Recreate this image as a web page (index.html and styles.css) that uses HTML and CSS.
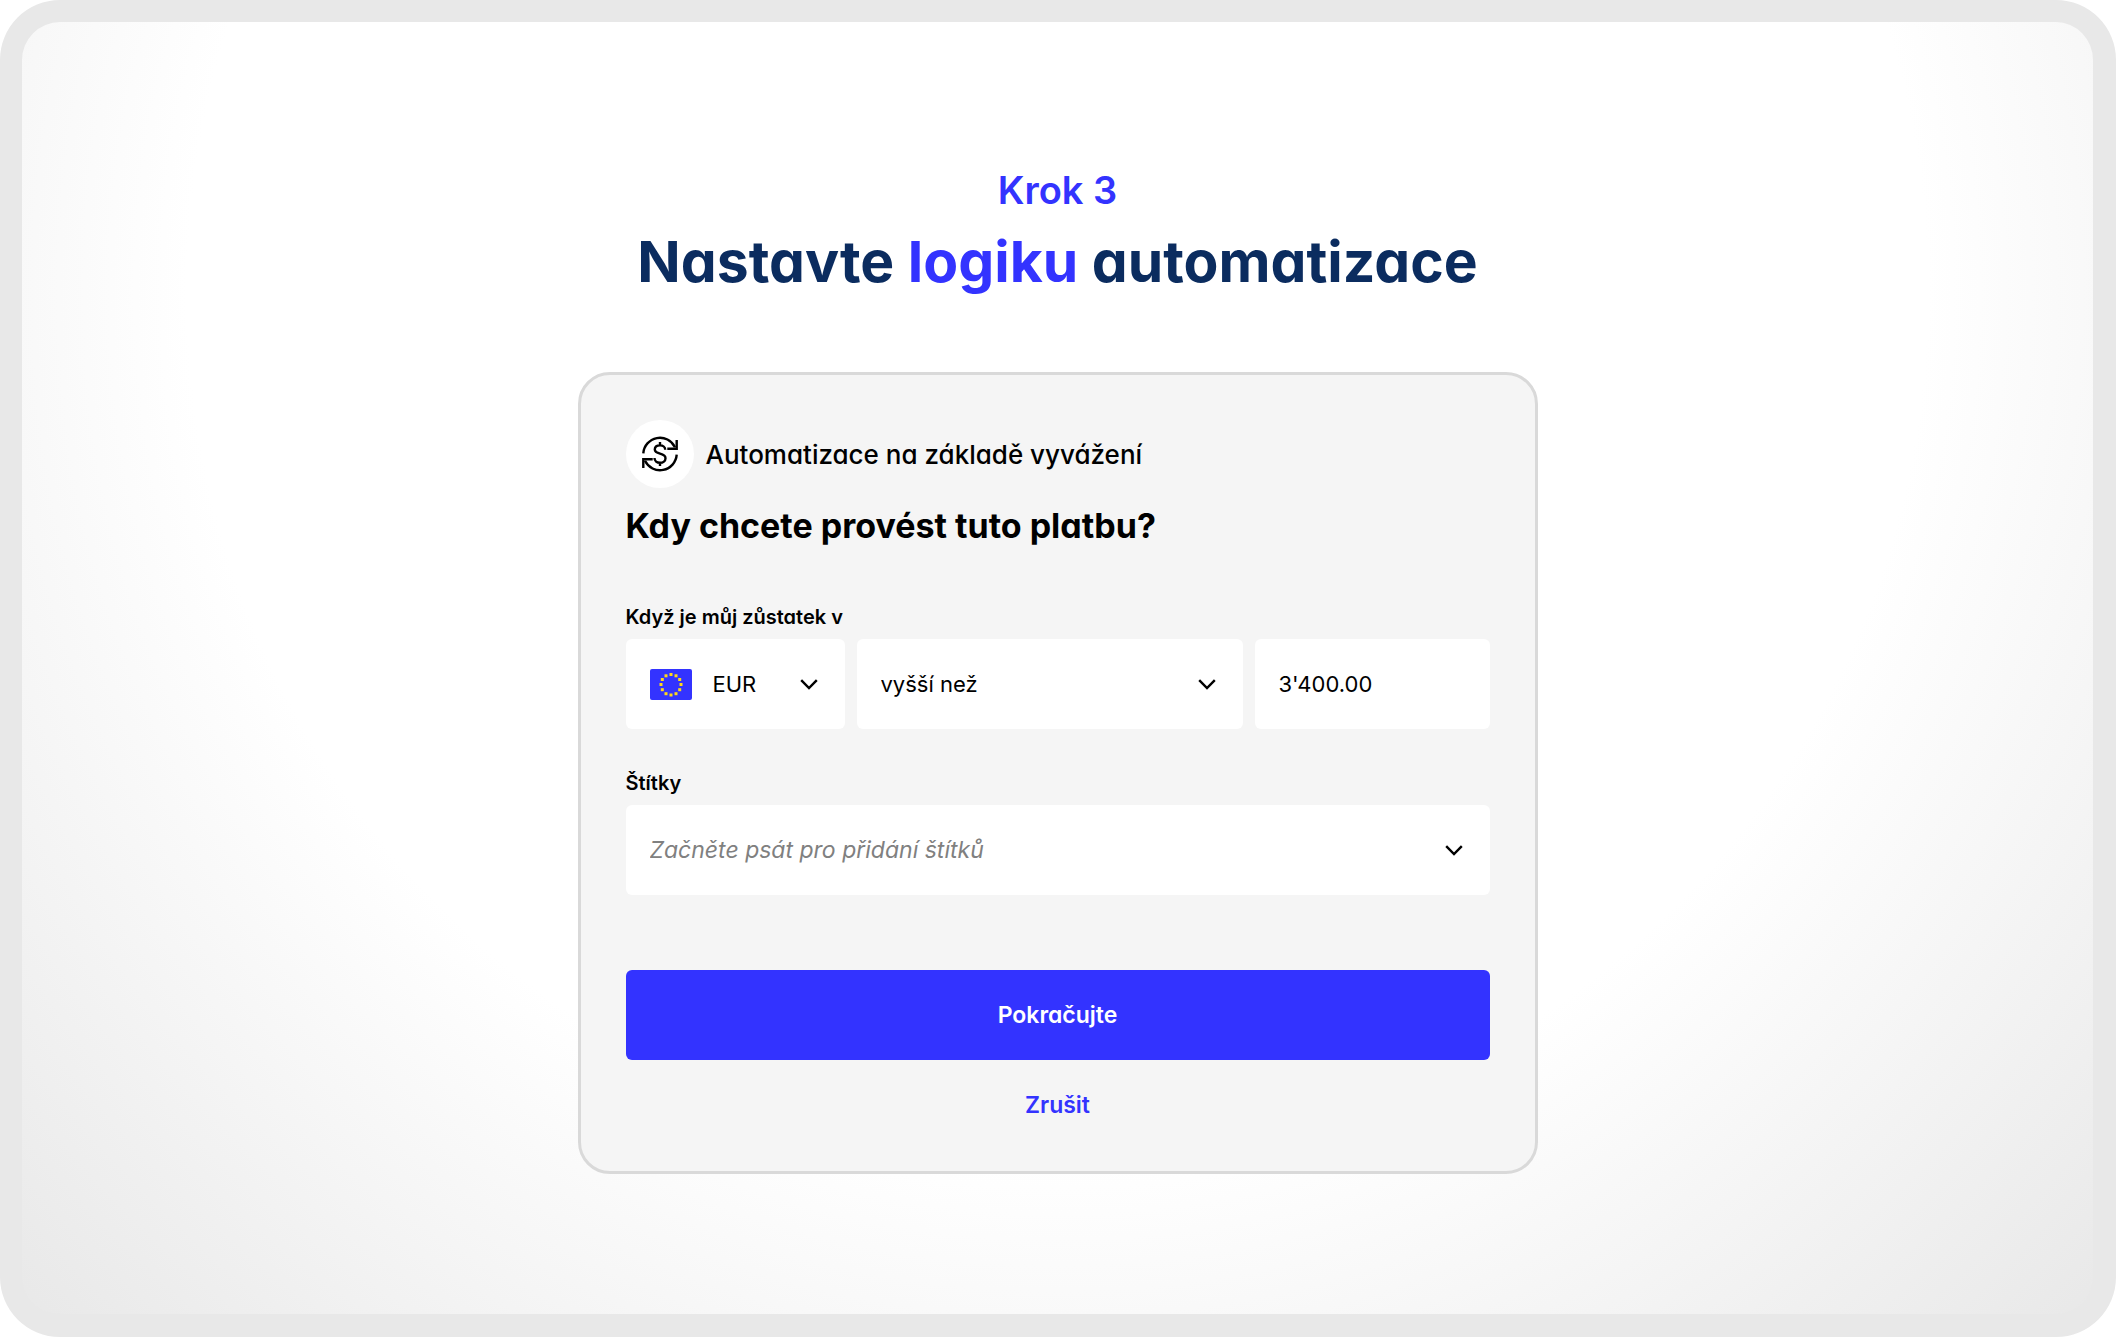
FILE: index.html
```
<!DOCTYPE html>
<html lang="cs">
<head>
  <meta charset="UTF-8">
  <meta name="viewport" content="width=device-width, initial-scale=1">
  <title>Nastavte logiku automatizace</title>
  <link rel="stylesheet" href="styles.css">
</head>
<body>

  <main class="frame">
    <header class="intro">
      <p class="step">Krok 3</p>
      <h1>Nastavte <span>logiku</span> automatizace</h1>
    </header>

    <form class="card">
      <div class="type">
        <div class="type-icon">
          <svg viewBox="0 0 36 36" width="36" height="36" fill="none" stroke="#000" stroke-width="2.4">
            <path d="M1.3 17.3A16.7 16.7 0 0 1 33 11.2"/>
            <path d="M34.7 4v8.8h-9.4"/>
            <path d="M34.7 18.7A16.7 16.7 0 0 1 3 24.8"/>
            <path d="M1.3 32v-8.8h9.4"/>
            <path d="M23.2 13.8c0-2.7-2.2-4.4-5.2-4.4s-5.2 1.6-5.2 4.2c0 5.6 10.7 2.6 10.7 8.6 0 2.8-2.4 4.6-5.5 4.6s-5.5-1.8-5.5-4.7M18 6v3.6M18 26.6V30"/>
          </svg>
        </div>
        <p>Automatizace na základě vyvážení</p>
      </div>

      <h2>Kdy chcete provést tuto platbu?</h2>

      <label class="field-label" for="currency">Když je můj zůstatek v</label>
      <div class="row">
        <div class="field currency">
          <svg class="flag" viewBox="0 0 42 31" width="42" height="31">
            <rect width="42" height="31" rx="2" fill="#3333ff"/>
            <g fill="#ffd91a">
              <rect x="19.5" y="4" width="3" height="3"/>
              <rect x="24.5" y="5.3" width="3" height="3"/>
              <rect x="28.2" y="9" width="3" height="3"/>
              <rect x="29.5" y="14" width="3" height="3"/>
              <rect x="28.2" y="19.2" width="3" height="3"/>
              <rect x="24.5" y="23.2" width="3" height="3"/>
              <rect x="19.5" y="24.5" width="3" height="3"/>
              <rect x="14.5" y="23.2" width="3" height="3"/>
              <rect x="10.8" y="19.2" width="3" height="3"/>
              <rect x="9.5" y="14" width="3" height="3"/>
              <rect x="10.8" y="9" width="3" height="3"/>
              <rect x="14.5" y="5.3" width="3" height="3"/>
            </g>
          </svg>
          <select id="currency">
            <option>EUR</option>
          </select>
          <svg class="chevron" viewBox="0 0 18 11" width="18" height="11"><path d="M1.2 1.2L9 9l7.8-7.8"/></svg>
        </div>
        <div class="field condition">
          <select aria-label="Podmínka">
            <option>vyšší než</option>
          </select>
          <svg class="chevron" viewBox="0 0 18 11" width="18" height="11"><path d="M1.2 1.2L9 9l7.8-7.8"/></svg>
        </div>
        <div class="field amount">
          <input type="text" value="3'400.00" aria-label="Částka">
        </div>
      </div>

      <label class="field-label" for="tags">Štítky</label>
      <div class="field">
        <input type="text" id="tags" placeholder="Začněte psát pro přidání štítků">
        <svg class="chevron" viewBox="0 0 18 11" width="18" height="11"><path d="M1.2 1.2L9 9l7.8-7.8"/></svg>
      </div>

      <button type="submit" class="submit">Pokračujte</button>
      <button type="button" class="cancel">Zrušit</button>
    </form>
  </main>

</body>
</html>
```
FILE: styles.css
```
* {
  box-sizing: border-box;
}

body {
  margin: 0;
  background: #fff;
  color: #000;
  font-family: Inter, "Open Sans", sans-serif;
  font-feature-settings: "cv11";
}

h1, h2, p {
  margin: 0;
}

.frame {
  min-height: 100vh;
  margin-right: 1px;
  padding: 138px 24px 72px;
  border: 22px solid #e8e8e8;
  border-right-width: 23px;
  border-bottom-width: 23px;
  border-radius: 60px;
  background: radial-gradient(circle at 50% 270px, #fff 870px, #e8e8e8 1460px);
}

.intro {
  text-align: center;
}

.step {
  color: #3333ff;
  font-size: 38px;
  font-weight: 600;
  line-height: 60px;
}

h1 {
  color: #0b2c5f;
  font-size: 57px;
  font-weight: 700;
  line-height: 84px;
}

h1 span {
  color: #3333ff;
}

.card {
  max-width: 960px;
  margin: 68px auto 0;
  padding: 45px 45px 48px;
  border: 3px solid #d9d9d9;
  border-radius: 32px;
  background: #f5f5f5;
}

.type {
  display: flex;
  align-items: center;
  gap: 12px;
  font-size: 26px;
  font-weight: 500;
}

.type-icon {
  display: flex;
  align-items: center;
  justify-content: center;
  width: 68px;
  height: 68px;
  border-radius: 50%;
  background: #fff;
}

h2 {
  margin: 14px 0 53px;
  font-size: 34px;
  font-weight: 700;
  line-height: 48px;
}

.field-label {
  display: block;
  margin-bottom: 8px;
  font-size: 20px;
  font-weight: 600;
  line-height: 28px;
}

.row {
  display: flex;
  gap: 12px;
  margin-bottom: 40px;
}

.field {
  position: relative;
  display: flex;
  align-items: center;
  height: 90px;
  border-radius: 6px;
  background: #fff;
}

.currency {
  flex: 219;
}

.condition {
  flex: 386;
}

.amount {
  flex: 235;
}

.flag {
  position: absolute;
  left: 24px;
  pointer-events: none;
}

.chevron {
  position: absolute;
  right: 27px;
  fill: none;
  stroke: #000;
  stroke-width: 2.4;
  pointer-events: none;
}

select,
input {
  width: 100%;
  height: 100%;
  padding: 0 24px;
  border: none;
  border-radius: 6px;
  background: none;
  color: #000;
  font: inherit;
  font-size: 22px;
  font-feature-settings: inherit;
  appearance: none;
}

.currency select {
  padding-left: 87px;
}

input::placeholder {
  color: #808080;
  font-size: 23px;
  font-style: italic;
  opacity: 1;
}

button {
  display: block;
  border: none;
  font: inherit;
  font-size: 23px;
  font-weight: 600;
  font-feature-settings: inherit;
  cursor: pointer;
}

.submit {
  width: 100%;
  height: 90px;
  margin-top: 75px;
  border-radius: 6px;
  background: #3333ff;
  color: #fff;
}

.cancel {
  margin: 27px auto 0;
  padding: 0 12px;
  background: none;
  color: #3333ff;
  line-height: 36px;
}
```
